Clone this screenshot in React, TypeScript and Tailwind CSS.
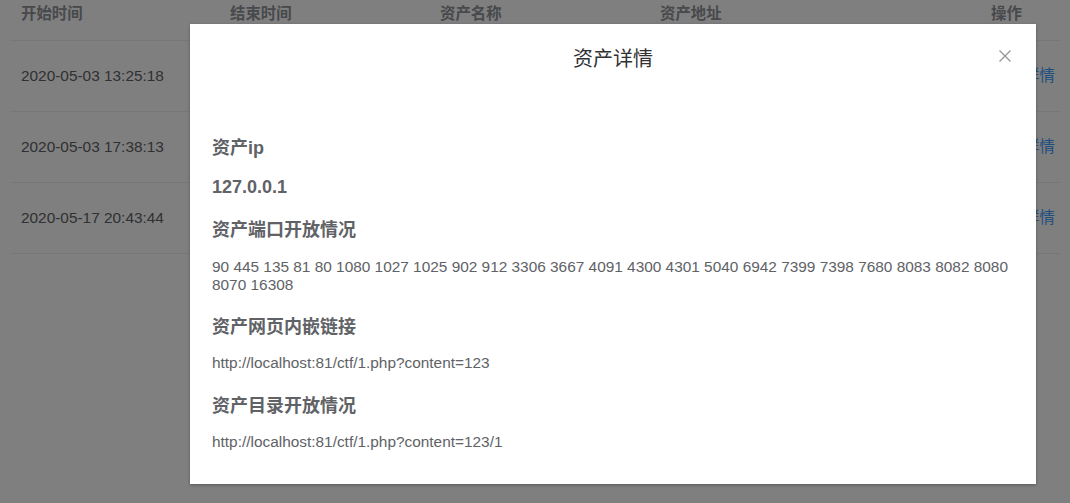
import React from "react";

const font = { fontFamily: '"Liberation Sans", "Noto Sans CJK SC", sans-serif' };

const rows = ["2020-05-03 13:25:18", "2020-05-03 17:38:13", "2020-05-17 20:43:44"];

function Row({ time }: { time: string }) {
  return (
    <div className="flex h-[71px] items-center border-b border-[#ebeef5] text-[15.4px] text-[#606266]">
      <div className="w-[209px] pl-[11px]">{time}</div>
      <div className="w-[210px]"></div>
      <div className="w-[220px]"></div>
      <div className="w-[331px]"></div>
      <div className="flex-1 pl-[44px] text-[#409eff]">详情</div>
    </div>
  );
}

export default function App() {
  return (
    <div className="relative h-[503px] w-[1070px] overflow-hidden bg-white" style={font}>
      {/* table */}
      <div className="pl-[10px] pr-[10px]">
        <div className="flex h-[41px] items-start border-b border-[#ebeef5] pt-[4px] text-[15.4px] font-bold leading-[20px] text-[#909399]">
          <div className="w-[209px] pl-[11px]">开始时间</div>
          <div className="w-[210px] pl-[11px]">结束时间</div>
          <div className="w-[220px] pl-[11px]">资产名称</div>
          <div className="w-[331px] pl-[11px]">资产地址</div>
          <div className="flex-1 pl-[11px]">操作</div>
        </div>
        {rows.map((r) => (
          <Row key={r} time={r} />
        ))}
      </div>

      {/* overlay */}
      <div className="absolute inset-0 bg-black/50"></div>

      {/* dialog */}
      <div className="absolute left-[190px] top-[24px] h-[460px] w-[846px] bg-white shadow-[0_1px_3px_rgba(0,0,0,0.3)]">
        <div className="relative pt-[23px] text-center">
          <div className="text-[20px] font-normal leading-[24px] text-[#303133]">资产详情</div>
          <button className="absolute right-[25px] top-[26px] h-[12px] w-[12px]">
            <svg width="12" height="12" viewBox="0 0 12 12" fill="none">
              <path d="M0.5 0.5 L11.5 11.5 M11.5 0.5 L0.5 11.5" stroke="#909399" strokeWidth="1.2" />
            </svg>
          </button>
        </div>
        <div className="pl-[22px] pr-[20px] pt-[65px] text-[#606266]">
          <div className="text-[18px] font-bold leading-[24px]">资产ip</div>
          <div className="mt-[15px] text-[18px] font-bold leading-[24px]">127.0.0.1</div>
          <div className="mt-[19px] text-[18px] font-bold leading-[24px]">资产端口开放情况</div>
          <div className="mt-[16px] text-[15.4px] leading-[18px]">
            90 445 135 81 80 1080 1027 1025 902 912 3306 3667 4091 4300 4301 5040 6942 7399 7398 7680 8083 8082 8080 8070 16308
          </div>
          <div className="mt-[21px] text-[18px] font-bold leading-[24px]">资产网页内嵌链接</div>
          <div className="mt-[15px] text-[15.4px] leading-[18px]">http://localhost:81/ctf/1.php?content=123</div>
          <div className="mt-[22px] text-[18px] font-bold leading-[24px]">资产目录开放情况</div>
          <div className="mt-[15px] text-[15.4px] leading-[18px]">http://localhost:81/ctf/1.php?content=123/1</div>
        </div>
      </div>
    </div>
  );
}
